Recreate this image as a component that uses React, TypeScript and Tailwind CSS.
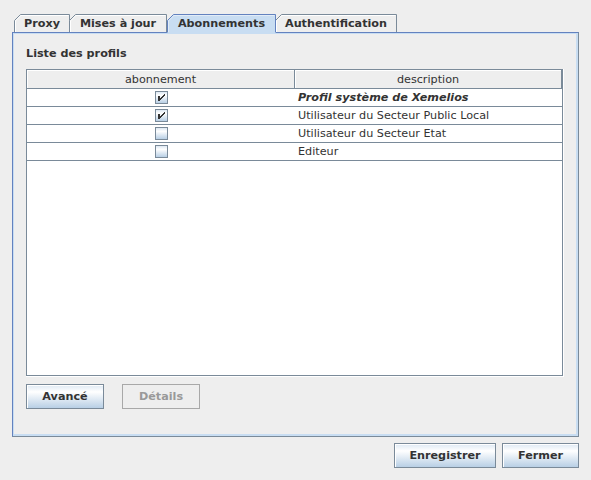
import React from 'react';

// Metal "Ocean" palette
const GRADIENT = 'bg-[linear-gradient(to_bottom,#DDE8F3_0%,#FFFFFF_30%,#B8CFE5_100%)]';

type TabProps = { label: string; w: number; className: string; selected?: boolean };

function Tab({ label, w, className, selected = false }: TabProps) {
  const h = selected ? 20 : 18;
  return (
    <div className={`relative shrink-0 ${className} ${selected ? 'z-10 h-[20px]' : 'h-[18px]'}`}>
      <svg className="absolute left-0 top-0" width={w} height={h}>
        {selected ? (
          <>
            <path d={`M0 ${h} V6.5 L6.5 0 H${w} V${h} Z`} fill="#C8DDF2" />
            <path d={`M0.5 18.5 V6.5 L6.5 0.5 H${w - 0.5} V18.5`} fill="none" stroke="#6382BF" />
            <path d={`M1.5 18 V6.9 L6.9 1.5 H${w - 1.5}`} fill="none" stroke="#E2ECF7" />
          </>
        ) : (
          <>
            <path d={`M0.5 ${h} V6.5 L6.5 0.5 H${w - 0.5} V${h}`} fill="#EEEEEE" stroke="#7A8A99" />
            <path d={`M1.5 ${h} V6.9 L6.9 1.5 H${w - 1.5}`} fill="none" stroke="#FFFFFF" />
          </>
        )}
      </svg>
      <span className="relative block text-center font-bold leading-[20px]">{label}</span>
    </div>
  );
}

function CheckBox({ checked }: { checked: boolean }) {
  return (
    <div className={`w-[13px] h-[13px] border border-[#7A8A99] ${GRADIENT}`}>
      {checked && (
        <svg width="11" height="11" viewBox="1 1 11 11" shapeRendering="crispEdges">
          <rect x="3" y="5" width="2" height="5" fill="#333333" />
          {[0, 1, 2, 3, 4].map((i) => (
            <rect key={i} x={9 - i} y={3 + i} width="1" height="2" fill="#333333" />
          ))}
        </svg>
      )}
    </div>
  );
}

function Button({ label, className, disabled = false }: { label: string; className: string; disabled?: boolean }) {
  return (
    <div
      className={`h-[25px] border text-center font-bold leading-[23px] ${className} ${
        disabled
          ? 'border-[#A8A8A8] bg-[#EEEEEE] text-[#999999]'
          : `border-[#7A8A99] ${GRADIENT} text-[#333333] shadow-[inset_1px_1px_0_#FFFFFF]`
      }`}
    >
      {label}
    </div>
  );
}

const rows = [
  { checked: true, label: 'Profil système de Xemelios', system: true },
  { checked: true, label: 'Utilisateur du Secteur Public Local' },
  { checked: false, label: 'Utilisateur du Secteur Etat' },
  { checked: false, label: 'Editeur' },
];

export default function App() {
  return (
    <div className="w-[591px] h-[480px] overflow-hidden bg-[#EEEEEE] pt-[14px] text-[11.2px] text-[#333333] font-['DejaVu_Sans',sans-serif]">
      {/* Tabs */}
      <div className="relative z-10 flex items-start h-[18px] ml-[14px]">
        <Tab label="Proxy" w={56} className="w-[56px]" />
        <Tab label="Mises à jour" w={98} className="w-[98px] -ml-px" />
        <Tab label="Abonnements" w={109} className="w-[109px]" selected />
        <Tab label="Authentification" w={122} className="w-[122px] -ml-px" />
      </div>

      {/* Tab content */}
      <div className="ml-[12px] w-[567px] h-[405px] border border-t-[#6382BF] border-l-[#6382BF] border-r-[#7A8A99] border-b-[#7A8A99]">
        <div className="h-full flex flex-col pl-[12px] border-t border-l border-r-2 border-b-2 border-[#C8DDF2]">
          <div className="mt-[13px] h-[14px] leading-[14px] font-bold">Liste des profils</div>

          {/* Table */}
          <div className="mt-[8px] w-[538px] h-[308px] border-r border-b border-white">
            <div className="h-full border border-[#7A8A99] bg-white">
              <div className="flex h-[19px] border-b border-[#7A8A99] bg-[#EEEEEE] leading-[19px]">
                <div className="w-[268px] text-center border-r border-[#7A8A99] shadow-[inset_1px_1px_0_#FFFFFF]">abonnement</div>
                <div className="flex-1 text-center shadow-[inset_1px_1px_0_#FFFFFF] border-r border-[#7A8A99]">description</div>
              </div>
              {rows.map((r) => (
                <div key={r.label} className="flex h-[18px] border-b border-[#7A8A99]">
                  <div className="w-[269px] flex items-center justify-center">
                    <CheckBox checked={r.checked} />
                  </div>
                  <div className={`flex-1 pl-[2px] leading-[17px] ${r.system ? 'font-bold italic' : ''}`}>{r.label}</div>
                </div>
              ))}
            </div>
          </div>

          <div className="mt-[7px] flex gap-[18px]">
            <Button label="Avancé" className="w-[78px]" />
            <Button label="Détails" className="w-[78px]" disabled />
          </div>
        </div>
      </div>

      {/* Dialog buttons */}
      <div className="mt-[6px] flex justify-end gap-[6px] pr-[12px]">
        <Button label="Enregistrer" className="w-[102px]" />
        <Button label="Fermer" className="w-[77px]" />
      </div>
    </div>
  );
}
